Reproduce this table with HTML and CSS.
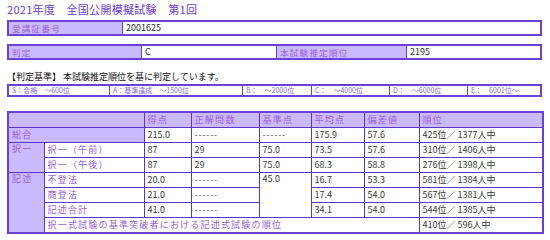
FILE: index.html
```html
<!DOCTYPE html>
<html lang="ja">
<head>
<meta charset="utf-8">
<link rel="stylesheet" href="styles.css">
</head>
<body>
<div class="page">
  <h1 class="title">2021年度　全国公開模擬試験　第1回</h1>

  <table class="box box-id">
    <tr>
      <th class="lbl w-id">受講証番号</th>
      <td class="val">2001625</td>
    </tr>
  </table>

  <table class="box box-judge">
    <tr>
      <th class="lbl w-j1">判定</th>
      <td class="val w-j2">C</td>
      <th class="lbl w-j3">本試験推定順位</th>
      <td class="val">2195</td>
    </tr>
  </table>

  <p class="note">【判定基準】 本試験推定順位を基に判定しています。</p>

  <table class="criteria">
    <tr>
      <td class="c-s">S：合格　～600位</td>
      <td class="c-a">A：基準達成　～1500位</td>
      <td class="c-b">B：　～2000位</td>
      <td class="c-c">C：　～4000位</td>
      <td class="c-d">D：　～6000位</td>
      <td>E：　6001位～</td>
    </tr>
  </table>

  <table class="scores">
    <colgroup>
      <col class="k1"><col class="k2"><col class="k3"><col class="k4"><col class="k5"><col class="k6"><col class="k7"><col class="k8">
    </colgroup>
    <tr>
      <th class="lbl" colspan="2"></th>
      <th class="lbl">得点</th>
      <th class="lbl">正解問数</th>
      <th class="lbl">基準点</th>
      <th class="lbl">平均点</th>
      <th class="lbl">偏差値</th>
      <th class="lbl">順位</th>
    </tr>
    <tr>
      <th class="lbl" colspan="2">総合</th>
      <td>215.0</td>
      <td class="dash">------</td>
      <td class="dash">------</td>
      <td>175.9</td>
      <td>57.6</td>
      <td>425位／ 1377人中</td>
    </tr>
    <tr>
      <th class="lbl top" rowspan="2">択一</th>
      <th class="sub">択一（午前）</th>
      <td>87</td>
      <td>29</td>
      <td>75.0</td>
      <td>73.5</td>
      <td>57.6</td>
      <td>310位／ 1406人中</td>
    </tr>
    <tr>
      <th class="sub">択一（午後）</th>
      <td>87</td>
      <td>29</td>
      <td>75.0</td>
      <td>68.3</td>
      <td>58.8</td>
      <td>276位／ 1398人中</td>
    </tr>
    <tr>
      <th class="lbl top" rowspan="4">記述</th>
      <th class="sub">不登法</th>
      <td>20.0</td>
      <td class="dash">------</td>
      <td class="top" rowspan="3">45.0</td>
      <td>16.7</td>
      <td>53.3</td>
      <td>581位／ 1384人中</td>
    </tr>
    <tr>
      <th class="sub">商登法</th>
      <td>21.0</td>
      <td class="dash">------</td>
      <td>17.4</td>
      <td>54.0</td>
      <td>567位／ 1381人中</td>
    </tr>
    <tr>
      <th class="sub">記述合計</th>
      <td>41.0</td>
      <td class="dash">------</td>
      <td>34.1</td>
      <td>54.0</td>
      <td>544位／ 1385人中</td>
    </tr>
    <tr>
      <th class="sub" colspan="6">択一式試験の基準突破者における記述式試験の順位</th>
      <td>410位／ 596人中</td>
    </tr>
  </table>
</div>
</body>
</html>
```

FILE: styles.css
```css
html, body {
  margin: 0;
  padding: 0;
  background: #ffffff;
}

body {
  font-family: "Noto Sans CJK JP", "Noto Sans", sans-serif;
  color: #333333;
}

.page {
  width: 535px;
  padding: 2px 0 0 7px;
}

.title {
  margin: 0;
  font-size: 11px;
  line-height: 14px;
  font-weight: normal;
  color: #6a3ccf;
  letter-spacing: 0.3px;
}

table {
  border-collapse: collapse;
  table-layout: fixed;
  width: 535px;
}

th, td {
  padding: 0 0 0 3px;
  text-align: left;
  vertical-align: middle;
  white-space: nowrap;
  overflow: hidden;
  font-weight: normal;
}

.box {
  border: 2px solid #6a42d6;
}

.box th, .box td {
  border: 1px solid #6a42d6;
  height: 12px;
  line-height: 12px;
}

.box-id {
  margin-top: 4px;
}

.box-judge {
  margin-top: 8px;
}

.lbl {
  background: #cbbaff;
  color: #9a5fe0;
  font-size: 8.5px;
  letter-spacing: 1.3px;
}

.val {
  background: #ffffff;
  color: #333333;
  font-size: 9px;
}

.w-id { width: 110px; }
.w-j1 { width: 129px; }
.w-j2 { width: 131px; }
.w-j3 { width: 126px; }

.note {
  margin: 11px 0 0 0;
  font-size: 9px;
  line-height: 12px;
  color: #111111;
}

.criteria {
  margin-top: 1px;
  border: 2px solid #6a42d6;
}

.criteria td {
  border: 1px solid #6a42d6;
  height: 9px;
  line-height: 9px;
  font-size: 7px;
  color: #8a6be0;
  padding-left: 3px;
}

.c-s { width: 97px; }
.c-a { width: 129px; }
.c-b { width: 65px; }
.c-c { width: 74px; }
.c-d { width: 74px; }

.scores {
  margin-top: 14px;
  border: 2px solid #6a42d6;
}

.scores th, .scores td {
  border: 1px solid #5b34c9;
  height: 14px;
  line-height: 12px;
  font-size: 9px;
}

.scores td {
  color: #3a3a3a;
  background: #ffffff;
}

.scores td.dash {
  color: #555555;
  letter-spacing: 0.8px;
}

.scores .sub {
  background: #ffffff;
  color: #9a5fe0;
  font-size: 9px;
  letter-spacing: 1.2px;
}

.scores .top {
  vertical-align: top;
}

.k1 { width: 36px; }
.k2 { width: 100px; }
.k3 { width: 47px; }
.k4 { width: 68px; }
.k5 { width: 52px; }
.k6 { width: 53px; }
.k7 { width: 55px; }
.k8 { width: 124px; }
```
